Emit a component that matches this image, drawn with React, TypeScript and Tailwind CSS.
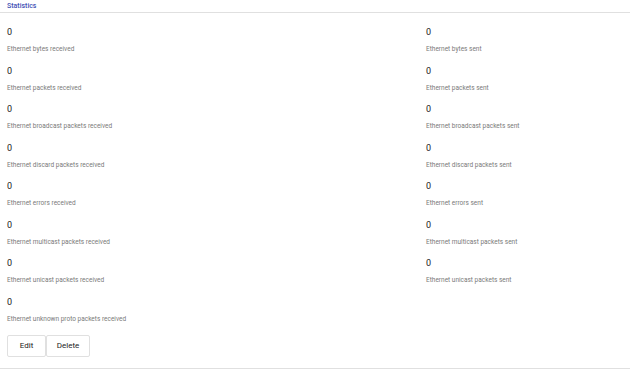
const left = [
  "Ethernet bytes received",
  "Ethernet packets received",
  "Ethernet broadcast packets received",
  "Ethernet discard packets received",
  "Ethernet errors received",
  "Ethernet multicast packets received",
  "Ethernet unicast packets received",
  "Ethernet unknown proto packets received",
];

const right = [
  "Ethernet bytes sent",
  "Ethernet packets sent",
  "Ethernet broadcast packets sent",
  "Ethernet discard packets sent",
  "Ethernet errors sent",
  "Ethernet multicast packets sent",
  "Ethernet unicast packets sent",
];

const Stat = ({ label }: { label: string }) => (
  <div className="h-[38.5px] pt-[9px]">
    <div className="text-[9px] leading-[11px] text-[#212121]">0</div>
    <div className="mt-[7px] text-[6.5px] leading-[9px] text-[#7a7a7a]">{label}</div>
  </div>
);

const App = () => {
  return (
    <div className="w-[630px] h-[370px] bg-white font-['Roboto',sans-serif]">
      <div className="border-b border-[#e0e0e0] h-[13px] px-[7px]">
        <div className="text-[7px] leading-[12px] font-medium text-[#3f51b5]">Statistics</div>
      </div>

      <div className="grid grid-cols-[419px_1fr] px-[7px] mt-[5px]">
        <div>
          {left.map((l) => (
            <Stat key={l} label={l} />
          ))}
        </div>
        <div>
          {right.map((l) => (
            <Stat key={l} label={l} />
          ))}
        </div>
      </div>

      <div className="flex px-[7px] mt-[9px]">
        <button className="w-[39px] h-[22px] border border-[#e0e0e0] rounded-[2px] text-[8px] text-[#212121]">
          Edit
        </button>
        <button className="w-[44px] h-[22px] border border-[#e0e0e0] rounded-[2px] text-[8px] text-[#212121]">
          Delete
        </button>
      </div>

      <div className="border-b border-[#e0e0e0] mt-[11px]"></div>
    </div>
  );
};

export default App;
